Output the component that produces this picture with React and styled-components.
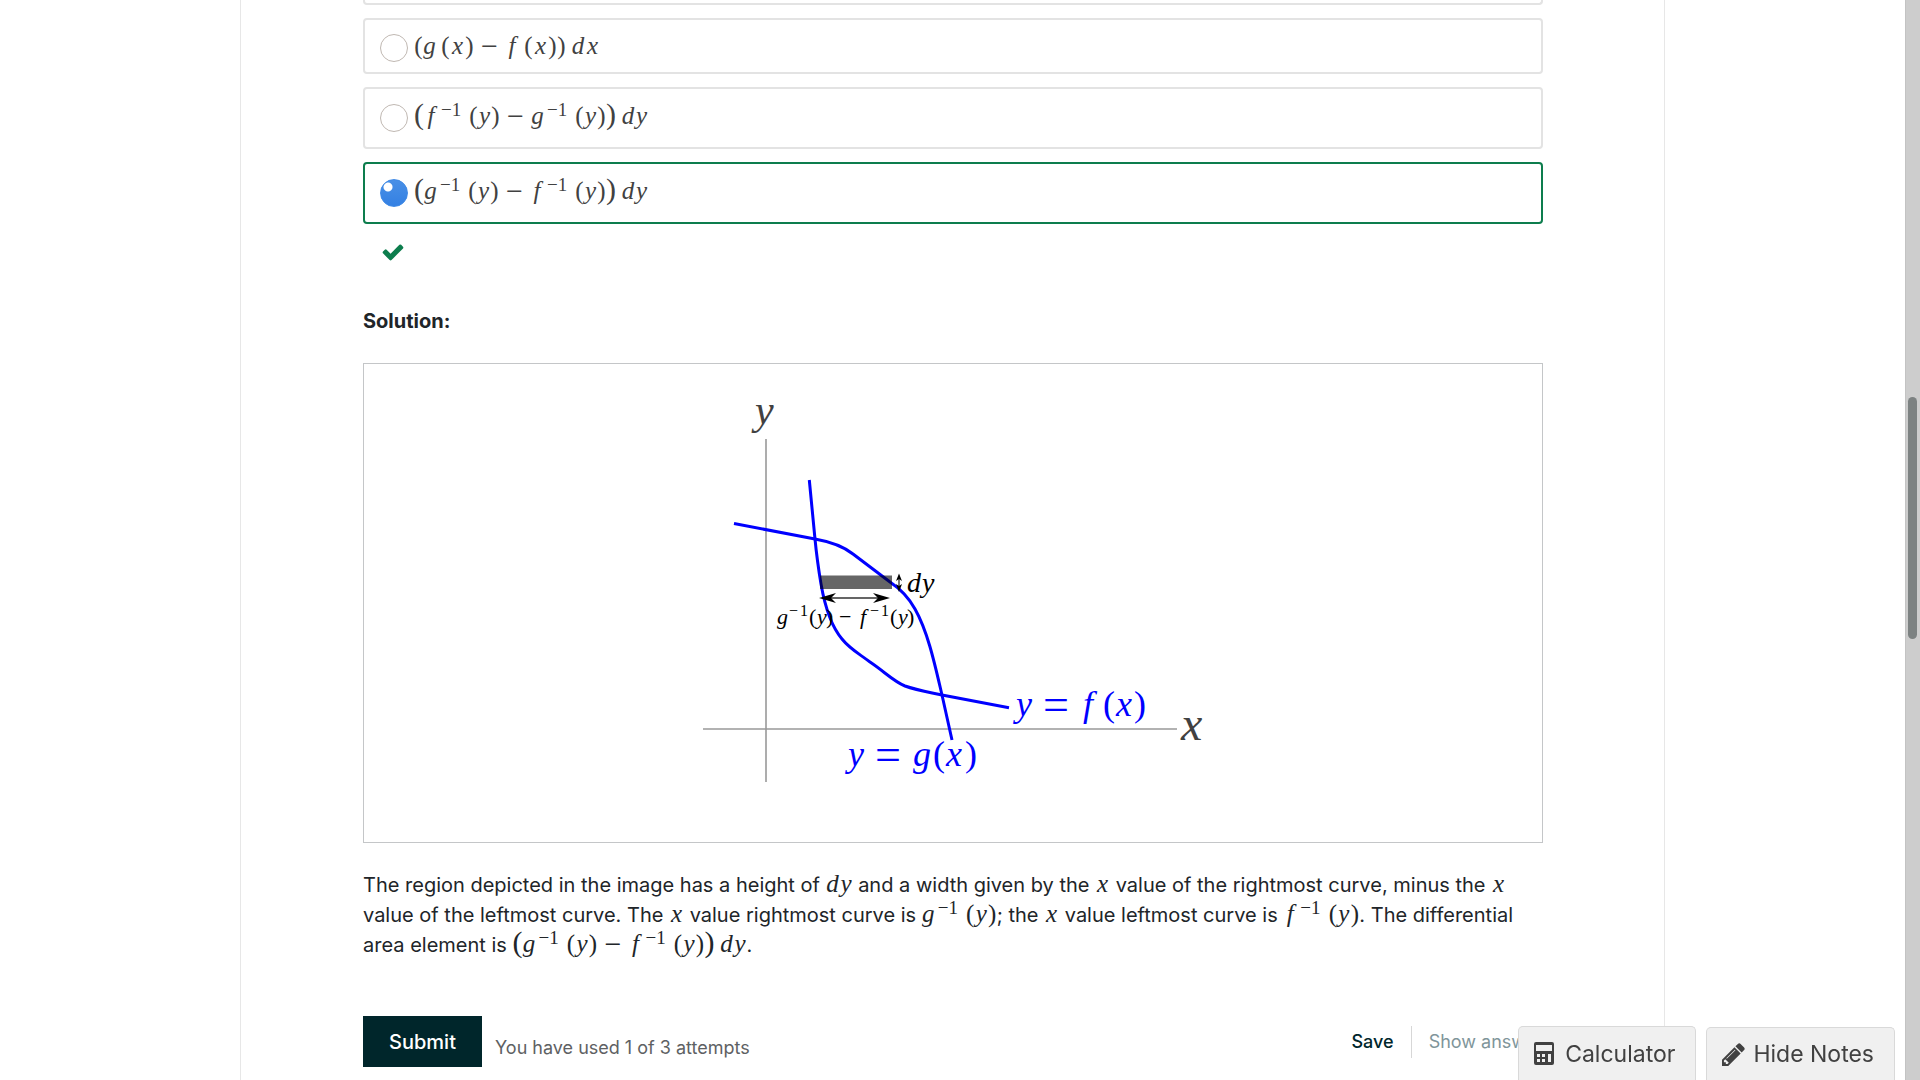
import React from "react";
import styled, { createGlobalStyle, css } from "styled-components";

const Global = createGlobalStyle`
  *, *::before, *::after { box-sizing: border-box; }
  html, body { margin: 0; height: 100%; overflow: hidden; background: #fff; }
  body { font-family: Inter, "Liberation Sans", sans-serif; font-size: 20px; color: #212529; }
`;

const serif = css`font-family: "Liberation Serif", serif;`;

const Page = styled.div`
  height: 100vh;
  overflow: hidden;
  padding-right: 15px;
`;
const Column = styled.main`
  max-width: 1425px;
  min-height: 100%;
  margin: 0 auto;
  padding: 0 121px 0 122px;
  border: solid #e7e7e7;
  border-width: 0 1px;
`;
const Options = styled.fieldset`
  display: flex;
  flex-direction: column;
  gap: 13px;
  margin: 0;
  padding: 0;
  border: 0;
`;
const OptionMath = styled.span`
  padding-bottom: 3px;
`;
const Option = styled.label`
  display: flex;
  align-items: center;
  gap: 6px;
  height: ${(p) => (p.$short ? 56 : 62)}px;
  padding: ${(p) => (p.$short ? 4 : 0)}px 16px 0 15px;
  border: 2px solid ${(p) => (p.$correct ? "#0d7d4d" : "#e3e3e3")};
  border-radius: 4px;
  color: #414141;
`;
const ScrolledOption = styled.div`
  height: 5px;
  border: 2px solid #e3e3e3;
  border-top: 0;
  border-radius: 0 0 4px 4px;
`;
const Radio = styled.input`
  appearance: none;
  flex: none;
  width: 28px;
  height: 28px;
  margin: 0;
  border: 1px solid #c0b8b2;
  border-radius: 50%;
  background: #fff;
  &:checked {
    border-color: #3f8ae6;
    background: radial-gradient(circle at 8px 8px, #fff 4px, transparent 5px), linear-gradient(#4a90e6, #3380e3);
    background-origin: border-box;
  }
`;
const Status = styled.div`
  display: flex;
  padding: 16px 0 0 18px;
  height: 76px;
  color: #0d7d4d;
`;
const Heading = styled.h3`
  margin: 0;
  font-size: 20px;
  line-height: 42px;
  font-weight: 700;
`;
const Figure = styled.figure`
  display: flex;
  justify-content: center;
  margin: 21px 0 27px;
  height: 480px;
  border: 1px solid #c4c6c8;
`;
const Explanation = styled.p`
  margin: 0;
  line-height: 30px;
`;
const MathText = styled.span`
  ${serif}
  display: inline-block;
  font-size: 25px;
  line-height: 20px;
  white-space: nowrap;
`;
const Glyph = styled.span`
  display: inline-block;
  width: ${(p) => p.$w}px;
  text-align: center;
  font-style: ${(p) => (p.$italic ? "italic" : "normal")};
`;
const Tall = styled(Glyph)`
  font-size: 30px;
  line-height: 20px;
`;
const Minus = styled(Glyph)`
  font-size: 30px;
  line-height: 16px;
  vertical-align: -2px;
`;
const Sup = styled.sup`
  display: inline-block;
  margin-left: 3px;
  width: 23px;
  font-size: 19px;
  line-height: 10px;
  vertical-align: 8px;
`;
const Space = styled.span`
  display: inline-block;
  width: ${(p) => p.$w}px;
`;
const Actions = styled.div`
  display: flex;
  align-items: center;
  margin-top: 56px;
`;
const Submit = styled.button`
  width: 119px;
  height: 51px;
  padding: 0;
  border: 0;
  background: #00262b;
  color: #fff;
  font: 500 20px Inter, sans-serif;
`;
const Attempts = styled.span`
  flex: 1;
  margin: 13px 0 0 13px;
  font-size: 18px;
  line-height: 24px;
  color: #5e6163;
`;
const Links = styled.div`
  display: flex;
  height: 32px;
  align-items: stretch;
`;
const LinkButton = styled.button`
  padding: 0 17px;
  border: 0;
  background: none;
  white-space: nowrap;
  color: ${(p) => (p.disabled ? "#80959a" : "#00262b")};
  font: ${(p) => (p.disabled ? 400 : 500)} 18px Inter, sans-serif;
  & + & { border-left: 1px solid #d7d7d7; margin-right: -17px; }
`;
const Tools = styled.div`
  position: fixed;
  right: 25px;
  bottom: 0;
  display: flex;
  align-items: flex-end;
  gap: 10px;
`;
const Tool = styled.button`
  display: flex;
  align-items: center;
  gap: ${(p) => p.$gap}px;
  height: ${(p) => p.$h}px;
  padding: 0 20px 0 15px;
  border: 1px solid #d9d9d9;
  border-bottom: 0;
  border-radius: 5px 5px 0 0;
  background: #f0f0f0;
  color: #414141;
  font: 400 23px Inter, sans-serif;
`;
const Track = styled.div`
  position: fixed;
  inset: 0 0 0 auto;
  width: 15px;
  padding: 397px 3px 0 2px;
  border-left: 1px solid #c3c3c3;
  background: #cdcdcd;
`;
const Thumb = styled.div`
  height: 242px;
  width: 9px;
  border-radius: 5px;
  background: #7d8282;
`;

const WIDTHS = { "(": 9, ")": 9, x: 15, y: 13, g: 13, f: 14, d: 14 };

function Expr({ children }) {
  return (
    <MathText>
      {children.split("").map((c, i) => {
        if (c === "^") return <Sup key={i}>−1</Sup>;
        if (c === "[" || c === "]") return <Tall key={i} $w={10}>{c === "[" ? "(" : ")"}</Tall>;
        if (c === "−") return <Minus key={i} $w={21}>−</Minus>;
        if (c === " ") return <Space key={i} $w={5} />;
        return <Glyph key={i} $w={WIDTHS[c]} $italic={/[a-z]/.test(c)}>{c}</Glyph>;
      })}
    </MathText>
  );
}

const Label = styled.text`
  ${serif}
  font-size: ${(p) => p.$size}px;
  font-style: italic;
`;
const Up = styled.tspan`font-style: normal;`;
const Small = styled.tspan`font-style: normal; font-size: 16px;`;
const Equals = styled.tspan`font-style: normal; font-size: 46px;`;

function Graph() {
  return (
    <svg width="520" height="478" viewBox="693 364 520 478" role="img" aria-label="Region between two curves">
      <path d="M766 439V782M703 729H1177" stroke="#999" strokeWidth="1.6" fill="none" />
      <g fill="none" stroke="#00f" strokeWidth="3">
        <path d="M734 523.5L815 539C832 542 843 546 853 554L890 582C902 590 909 598 915 609C928 632 935 665 942 695L952 740" />
        <path d="M809.3 480L815 539C817 560 819 572 821 584C825 607 831 626 842 639C850 649 858 653 870 662C885 672 893 681 905 686C916 690 928 692 942 695L1009 707.7" />
      </g>
      <path d="M820 575.5H892V589H820Z" fill="#000" opacity=".6" />
      <path d="M825 598H885M899 578V587" stroke="#333" strokeWidth="1.3" />
      <path d="M819 598L836 593L831 598L836 603ZM890 598L873 593L878 598L873 603ZM899 573.5L896 581L899 579L902 581ZM899 592L896 584L899 586L902 584Z" />
      <Label $size={42} x="755" y="424" fill="#414141">y</Label>
      <Label $size={48} x="1181" y="740" fill="#414141">x</Label>
      <Label $size={28} x="907" y="592">d<tspan x="922">y</tspan></Label>
      <Label $size={22} y="624">
        <tspan x="777">g</tspan><Small x="789 800" y="616">−1</Small><Up x="809" y="624">(</Up><tspan x="817">y</tspan><Up x="826">)</Up>
        <Up x="839">−</Up><tspan x="860">f</tspan><Small x="870 881" y="616">−1</Small><Up x="890" y="624">(</Up><tspan x="898">y</tspan><Up x="907">)</Up>
      </Label>
      <Label $size={36} y="716" fill="#00f">
        <tspan x="1016">y</tspan><Equals x="1043" y="720">=</Equals><tspan x="1083" y="716">f</tspan><Up x="1103">(</Up><tspan x="1116">x</tspan><Up x="1134">)</Up>
      </Label>
      <Label $size={36} y="766" fill="#00f">
        <tspan x="848">y</tspan><Equals x="875" y="770">=</Equals><tspan x="913" y="766">g</tspan><Up x="933">(</Up><tspan x="946">x</tspan><Up x="965">)</Up>
      </Label>
    </svg>
  );
}

export default function App() {
  return (
    <>
      <Global />
      <Page>
        <Column>
          <Options>
            <ScrolledOption />
            <Option $short>
              <Radio type="radio" name="area" />
              <OptionMath><Expr>(g (x) − f (x)) dx</Expr></OptionMath>
            </Option>
            <Option>
              <Radio type="radio" name="area" />
              <OptionMath><Expr>[f^ (y) − g^ (y)] dy</Expr></OptionMath>
            </Option>
            <Option $correct>
              <Radio type="radio" name="area" defaultChecked />
              <OptionMath><Expr>[g^ (y) − f^ (y)] dy</Expr></OptionMath>
            </Option>
          </Options>
          <Status>
            <svg width="24" height="24" viewBox="0 0 1792 1792" fill="currentColor" role="img" aria-label="correct">
              <path d="M1671 566q0 40-28 68l-724 724-136 136q-28 28-68 28t-68-28l-136-136-362-362q-28-28-28-68t28-68l136-136q28-28 68-28t68 28l294 295 656-657q28-28 68-28t68 28l136 136q28 28 28 68z" />
            </svg>
          </Status>
          <Heading>Solution:</Heading>
          <Figure><Graph /></Figure>
          <Explanation>
            The region depicted in the image has a height of <Expr>dy</Expr> and a width given by the <Expr>x</Expr> value
            of the rightmost curve, minus the <Expr>x</Expr> value of the leftmost curve. The <Expr>x</Expr> value
            rightmost curve is <Expr>g^ (y)</Expr>; the <Expr>x</Expr> value leftmost curve is <Expr>f^ (y)</Expr>. The
            differential area element is <Expr>[g^ (y) − f^ (y)] dy</Expr>.
          </Explanation>
          <Actions>
            <Submit type="button">Submit</Submit>
            <Attempts>You have used 1 of 3 attempts</Attempts>
            <Links>
              <LinkButton type="button">Save</LinkButton>
              <LinkButton type="button" disabled>Show answer</LinkButton>
            </Links>
          </Actions>
        </Column>
      </Page>
      <Tools>
        <Tool type="button" $h={54} $gap={11}>
          <svg width="20" height="23" viewBox="0 0 20 23" fill="currentColor" fillRule="evenodd" aria-hidden="true">
            <path d="M2 0H18Q20 0 20 2V21Q20 23 18 23H2Q0 23 0 21V2Q0 0 2 0ZM2 3V9H18V3ZM3 12V15H6V12ZM8 12V15H11V12ZM14 12V20H17V12ZM3 17V20H6V17ZM8 17V20H11V17Z" />
          </svg>
          Calculator
        </Tool>
        <Tool type="button" $h={53} $gap={8}>
          <svg width="23" height="23" viewBox="128 128 1536 1536" fill="currentColor" aria-hidden="true">
            <path d="M491 1536l91-91-235-235-91 91v107h128v128h107zm523-928q0-22-22-22-10 0-17 7l-542 542q-7 7-7 17 0 22 22 22 10 0 17-7l542-542q7-7 7-17zm-54-192l416 416-832 832h-416v-416zm683 96q0 53-37 90l-166 166-416-416 166-165q36-38 90-38 53 0 91 38l235 234q37 39 37 91z" />
          </svg>
          Hide Notes
        </Tool>
      </Tools>
      <Track><Thumb /></Track>
    </>
  );
}
